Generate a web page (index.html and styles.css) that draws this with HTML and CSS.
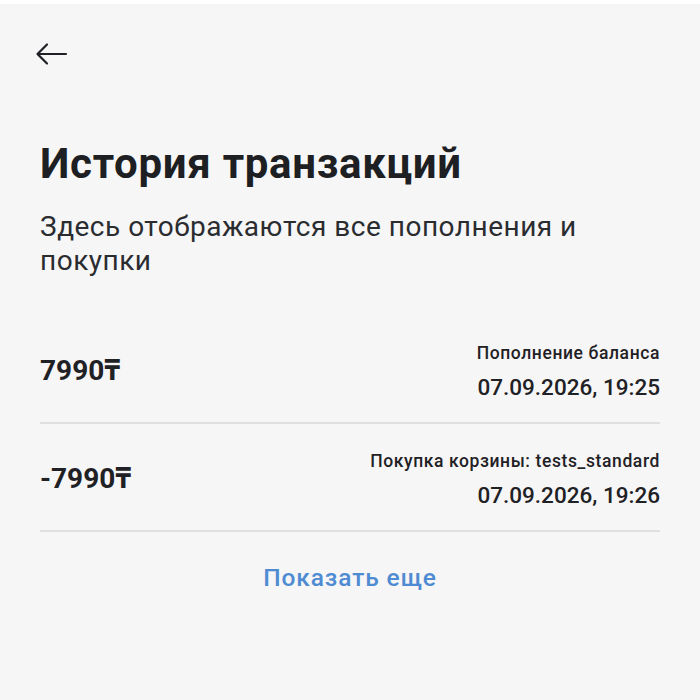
FILE: index.html
```html
<!DOCTYPE html>
<html lang="ru">
<head>
<meta charset="utf-8">
<link rel="stylesheet" href="styles.css">
</head>
<body>
<div class="statusbar"></div>
<main class="page">
  <header class="topbar">
    <button class="back" aria-label="Назад">
      <svg width="34" height="24" viewBox="0 0 34 24" fill="none" stroke="#1f2125" stroke-width="2.2" stroke-linecap="round" stroke-linejoin="round">
        <path d="M31 12H3M12 2.5L2.5 12L12 21.5"/>
      </svg>
    </button>
  </header>
  <h1 class="title">История транзакций</h1>
  <p class="subtitle">Здесь отображаются все пополнения и покупки</p>
  <ul class="list">
    <li class="row">
      <span class="amount">7990₸</span>
      <div class="meta">
        <span class="label">Пополнение баланса</span>
        <span class="date">07.09.2026, 19:25</span>
      </div>
    </li>
    <li class="row">
      <span class="amount">-7990₸</span>
      <div class="meta">
        <span class="label">Покупка корзины: tests_standard</span>
        <span class="date">07.09.2026, 19:26</span>
      </div>
    </li>
  </ul>
  <div class="more-wrap"><button class="more">Показать еще</button></div>
</main>
</body>
</html>
```
FILE: styles.css
```css
* { box-sizing: border-box; }
html, body { margin: 0; padding: 0; }
body {
  background: #f6f6f7;
  font-family: Roboto, "Noto Sans", "Liberation Sans", sans-serif;
  color: #1f2125;
}
.statusbar { height: 4px; background: #ffffff; }
.page { padding: 0 40px; }
.topbar { height: 100px; display: flex; align-items: center; }
.back {
  margin-left: -5px;
  padding: 0;
  border: 0;
  background: none;
  display: flex;
}
.title {
  margin: 36px 0 0;
  font-size: 42px;
  line-height: 48px;
  font-weight: 700;
  letter-spacing: 0.7px;
  color: #1d1f23;
}
.subtitle {
  margin: 22px 0 0;
  font-size: 28px;
  line-height: 34px;
  font-weight: 400;
  letter-spacing: 0.5px;
  color: #2a2c30;
}
.list { list-style: none; margin: 38px 0 0; padding: 0; }
.row {
  display: flex;
  justify-content: space-between;
  align-items: center;
  padding: 25px 0 21px;
  border-bottom: 2px solid #dedfe0;
}
.amount { font-size: 28px; font-weight: 700; line-height: 32px; }
.meta { display: flex; flex-direction: column; align-items: flex-end; gap: 8px; }
.label { font-size: 17.5px; line-height: 24px; font-weight: 500; letter-spacing: 0.6px; }
.date { font-size: 22.5px; line-height: 28px; font-weight: 500; }
.more-wrap { display: flex; justify-content: center; padding-top: 30px; }
.more {
  border: 0;
  background: none;
  padding: 0;
  font-family: inherit;
  font-size: 24.5px;
  line-height: 32px;
  letter-spacing: 0.9px;
  color: #4f8bd2;
  font-weight: 500;
}
```
